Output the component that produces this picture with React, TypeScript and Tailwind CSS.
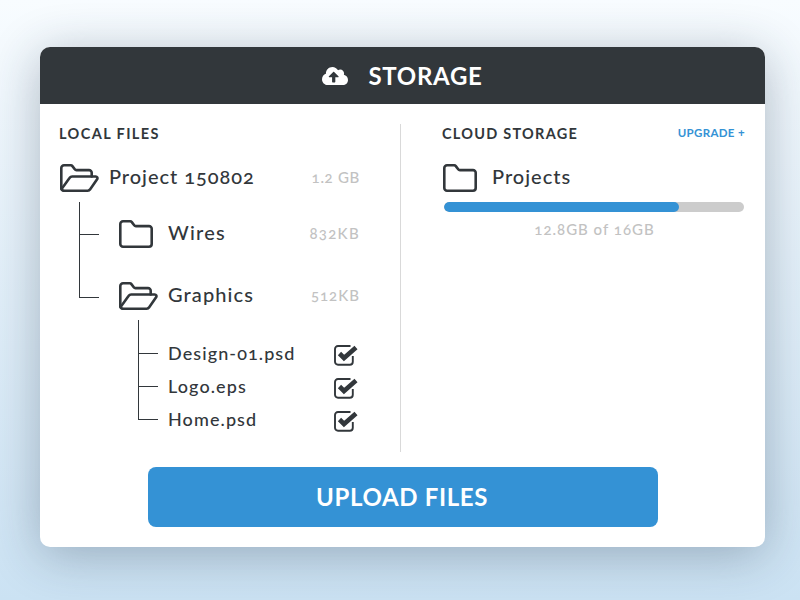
import React from "react";
import { FaCloudUploadAlt } from "react-icons/fa";

function ClosedFolder() {
  return (
    <svg width="34" height="28" viewBox="0 0 34 28" fill="none" stroke="#32373b" strokeWidth="2.6" strokeLinejoin="round" className="shrink-0">
      <path d="M1.3 4a2.7 2.7 0 0 1 2.7-2.7h7.2a2 2 0 0 1 1.6.8l2.4 3.2a2 2 0 0 0 1.6.8H30a2.7 2.7 0 0 1 2.7 2.7V24a2.7 2.7 0 0 1-2.7 2.7H4A2.7 2.7 0 0 1 1.3 24Z" />
    </svg>
  );
}

function OpenFolder() {
  return (
    <svg width="39" height="28" viewBox="0 0 39 28" fill="none" stroke="#32373b" strokeWidth="2.6" strokeLinejoin="round" strokeLinecap="round" className="shrink-0">
      <path d="M3.5 26.7A2.6 2.6 0 0 1 1.3 24V4A2.7 2.7 0 0 1 4 1.3h6.8a2 2 0 0 1 1.6.8l2.4 3.2a2 2 0 0 0 1.6.8H29a2.7 2.7 0 0 1 2.7 2.7v3.6" />
      <path d="M3.5 26.7h24.2a3 3 0 0 0 2.5-1.4l6.9-10.1c.8-1.2.1-2.7-1.4-2.7H12.2a3 3 0 0 0-2.5 1.3L1.6 25" />
    </svg>
  );
}

function Check() {
  return (
    <svg width="24" height="21" viewBox="0 0 24 21" fill="none" className="shrink-0 mt-[3px]">
      <path d="M18.8 11v5.8a3 3 0 0 1-3 3H4a3 3 0 0 1-3-3V4a3 3 0 0 1 3-3h12.5" stroke="#32373b" strokeWidth="1.9" />
      <path d="M5.5 8.5 10 13 22 2.5" stroke="#32373b" strokeWidth="4.6" />
    </svg>
  );
}

function Conn({ last }: { last?: boolean }) {
  return (
    <div className="w-5 shrink-0 flex flex-col self-stretch">
      <div className="flex-1 border-l border-b border-[#32373b]" />
      <div className={last ? "flex-1" : "flex-1 border-l border-[#32373b]"} />
    </div>
  );
}

const FONT = "font-['Lato','Liberation_Sans',sans-serif]";

function FileRow({ name, last }: { name: string; last?: boolean }) {
  return (
    <div className="flex items-center h-[33px]">
      <Conn last={last} />
      <span className="ml-[10px] w-[166px] pb-[1px] text-[18px] tracking-[1.1px] font-medium text-[#32373b] oldstyle-nums">{name}</span>
      <Check />
    </div>
  );
}

function FolderRow({ icon, name, size, cls, sizeCls }: { icon: React.ReactNode; name: string; size: string; cls: string; sizeCls: string }) {
  return (
    <>
      {icon}
      <span className={`${cls} pb-[4px] text-[20px] font-medium text-[#32373b] oldstyle-nums`}>{name}</span>
      <span className={`ml-auto pb-[2px] text-[15px] font-medium text-[#c2c2c2] oldstyle-nums ${sizeCls}`}>{size}</span>
    </>
  );
}

export default function App() {
  return (
    <div className={`${FONT} w-[800px] h-[600px] overflow-hidden bg-gradient-to-b from-[#f8fcff] to-[#cbe2f3] pt-[47px] pl-[40px]`}>
      <div className="w-[725px] h-[500px] rounded-[10px] bg-white shadow-[0_8px_50px_rgba(30,50,70,0.32)] overflow-hidden flex flex-col">
        <header className="h-[57px] shrink-0 bg-[#32373b] flex items-center justify-center gap-[20px]">
          <FaCloudUploadAlt className="text-white" size={26} />
          <h1 className="text-[24px] tracking-[0.7px] font-bold text-white">STORAGE</h1>
        </header>
        <div className="flex pt-[20px]">
          <section className="w-[361px] h-[328px] border-r border-[#d9d9d9] pl-[19px] pr-[40px] shrink-0">
            <h2 className="h-5 flex items-center text-[14.5px] tracking-[1.4px] font-bold text-[#32373b]">LOCAL FILES</h2>
            <div className="flex items-center h-7 mt-5 pl-px">
              <FolderRow icon={<OpenFolder />} name="Project 150802" cls="ml-[10px] tracking-[0.95px]" size="1.2 GB" sizeCls="tracking-[0.7px]" />
            </div>
            <div className="mt-[10px] ml-5">
              <div className="flex items-center h-[64px]">
                <Conn />
                <div className="flex items-center flex-1 ml-[20px]">
                  <FolderRow icon={<ClosedFolder />} name="Wires" cls="ml-[15px] tracking-[1.2px]" size="832KB" sizeCls="tracking-[1.3px]" />
                </div>
              </div>
              <div className="flex h-[54px]">
                <div className="w-5 h-[32px] shrink-0 border-l border-b border-[#32373b]" />
                <div className="flex items-center self-start h-7 mt-[16px] flex-1 ml-[20px]">
                  <FolderRow icon={<OpenFolder />} name="Graphics" cls="ml-[10px] tracking-[1.1px]" size="512KB" sizeCls="tracking-[1px]" />
                </div>
              </div>
              <div className="ml-[59px]">
                <div className="h-[17px] border-l border-[#32373b]" />
                <FileRow name="Design-01.psd" />
                <FileRow name="Logo.eps" />
                <FileRow name="Home.psd" last />
              </div>
            </div>
          </section>
          <section className="flex-1 pl-[41px] pr-[20px]">
            <div className="h-5 flex items-center justify-between">
              <h2 className="text-[14.5px] tracking-[1.25px] font-bold text-[#32373b]">CLOUD STORAGE</h2>
              <a className="pb-[2px] text-[11.5px] tracking-[0.35px] font-bold text-[#3492d5]">UPGRADE +</a>
            </div>
            <div className="flex items-center h-7 mt-5 ml-px">
              <ClosedFolder />
              <span className="ml-[15px] pb-[4px] text-[20px] tracking-[1px] font-medium text-[#32373b]">Projects</span>
            </div>
            <div className="mt-[10px] ml-[2px] mr-px h-[10px] rounded-full bg-[#cccccc] overflow-hidden">
              <div className="h-full w-[235px] rounded-full bg-[#3492d5]" />
            </div>
            <p className="mt-[6px] ml-[2px] text-center text-[15px] tracking-[1px] font-medium text-[#c2c2c2] oldstyle-nums">12.8GB of 16GB</p>
          </section>
        </div>
        <button className="mt-[15px] ml-[108px] w-[510px] h-[60px] pr-[2px] rounded-[8px] bg-[#3492d5] text-white text-[24px] tracking-[0.65px] font-bold">UPLOAD FILES</button>
      </div>
    </div>
  );
}
